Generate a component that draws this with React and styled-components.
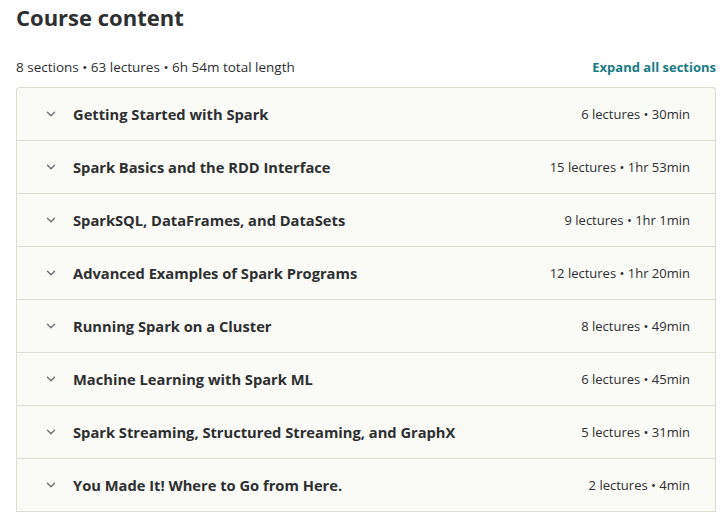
import styled, { createGlobalStyle } from 'styled-components';

const GlobalStyle = createGlobalStyle`
  body {
    margin: 0;
    background: #ffffff;
    font-family: "Open Sans", "Noto Sans", sans-serif;
    color: #2d2f31;
  }
`;

const Page = styled.div`
  padding: 0 10px 0 16px;
`;

const Title = styled.h2`
  margin: 0;
  padding-top: 3px;
  font-size: 22px;
  font-weight: 700;
  line-height: 28px;
  color: #2d2f31;
`;

const MetaBar = styled.div`
  display: flex;
  align-items: center;
  justify-content: space-between;
  margin-top: 26px;
  height: 20px;
`;

const Meta = styled.span`
  font-size: 13.5px;
  color: #2d2f31;
`;

const ExpandLink = styled.button`
  border: none;
  background: none;
  padding: 0;
  font-family: inherit;
  font-size: 13px;
  font-weight: 700;
  color: #1a7b86;
  cursor: pointer;
`;

const Sections = styled.div`
  margin-top: 10px;
  border: 1px solid #dcdccf;
  border-bottom: none;
  border-radius: 4px 4px 0 0;
  background: #fafaf6;
`;

const Row = styled.div`
  display: flex;
  align-items: center;
  height: 52px;
  padding: 0 25px 0 28px;
  border-bottom: 1px solid #dcdccf;
`;

const Chevron = styled.svg`
  width: 14px;
  height: 14px;
  flex-shrink: 0;
  color: #6a6f73;
  margin-right: 15px;
  margin-left: -1px;
`;

const SectionTitle = styled.span`
  flex: 1;
  font-size: 14.7px;
  font-weight: 700;
  color: #2d2f31;
`;

const SectionMeta = styled.span`
  font-size: 13px;
  color: #2d2f31;
`;

const sections = [
  { title: 'Getting Started with Spark', meta: '6 lectures • 30min' },
  { title: 'Spark Basics and the RDD Interface', meta: '15 lectures • 1hr 53min' },
  { title: 'SparkSQL, DataFrames, and DataSets', meta: '9 lectures • 1hr 1min' },
  { title: 'Advanced Examples of Spark Programs', meta: '12 lectures • 1hr 20min' },
  { title: 'Running Spark on a Cluster', meta: '8 lectures • 49min' },
  { title: 'Machine Learning with Spark ML', meta: '6 lectures • 45min' },
  { title: 'Spark Streaming, Structured Streaming, and GraphX', meta: '5 lectures • 31min' },
  { title: 'You Made It! Where to Go from Here.', meta: '2 lectures • 4min' },
];

export default function App() {
  return (
    <Page>
      <GlobalStyle />
      <Title>Course content</Title>
      <MetaBar>
        <Meta>8 sections • 63 lectures • 6h 54m total length</Meta>
        <ExpandLink>Expand all sections</ExpandLink>
      </MetaBar>
      <Sections>
        {sections.map((s) => (
          <Row key={s.title}>
            <Chevron viewBox="0 0 24 24" fill="none" stroke="currentColor" strokeWidth="2.4" strokeLinecap="round" strokeLinejoin="round">
              <path d="M6 9l6 6 6-6" />
            </Chevron>
            <SectionTitle>{s.title}</SectionTitle>
            <SectionMeta>{s.meta}</SectionMeta>
          </Row>
        ))}
      </Sections>
    </Page>
  );
}
